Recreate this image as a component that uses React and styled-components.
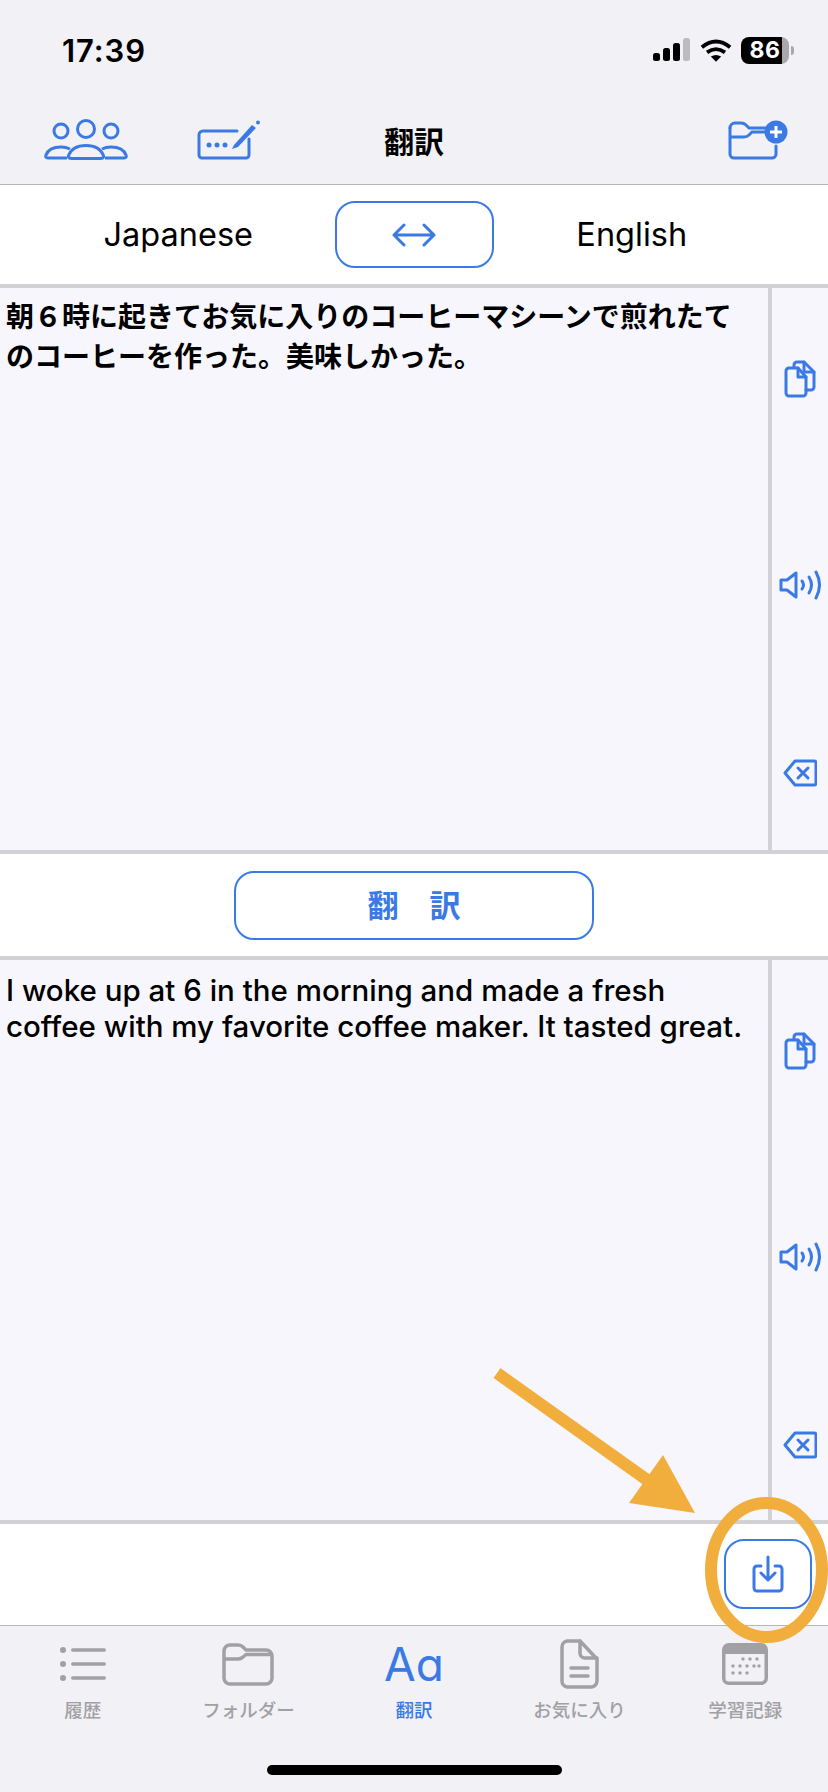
import React from "react";
import styled, { createGlobalStyle } from "styled-components";

const BLUE = "#3b7ae4";
const GRAY = "#a1a1a4";
const LATIN = `Inter, "Noto Sans CJK JP", sans-serif`;

const panels = [
  {
    text: "朝６時に起きてお気に入りのコーヒーマシーンで煎れたてのコーヒーを作った。美味しかった。",
    height: 562,
    cjk: true,
  },
  {
    text: "I woke up at 6 in the morning and made a fresh\ncoffee with my favorite coffee maker. It tasted great.",
    height: 560,
  },
];

function CopyIcon() {
  return (
    <svg width="32" height="38" viewBox="0 0 32 38" fill="none" stroke={BLUE} strokeWidth="3" strokeLinejoin="round" strokeLinecap="round">
      <path d="M5 8h9l8 9v16a3 3 0 0 1-3 3H5a3 3 0 0 1-3-3V11a3 3 0 0 1 3-3z" />
      <path d="M14 8v9h8" />
      <path d="M10 7V5a3 3 0 0 1 3-3h7l10 10v15a3 3 0 0 1-3 3h-5" />
      <path d="M20 2v10h10" />
    </svg>
  );
}

function SpeakerIcon() {
  return (
    <svg width="42" height="30" viewBox="0 0 42 30" fill="none" stroke={BLUE} strokeWidth="3" strokeLinejoin="round" strokeLinecap="round">
      <path d="M2 10h6l9-7v24l-9-7H2z" />
      <path d="M23 11q3 4 0 8" />
      <path d="M30 7q5 8 0 16" />
      <path d="M37 2q7 13 0 26" />
    </svg>
  );
}

function ClearIcon() {
  return (
    <svg width="34" height="28" viewBox="0 0 34 28" fill="none" stroke={BLUE} strokeWidth="3" strokeLinejoin="round" strokeLinecap="round">
      <path d="M12 2h19a2 2 0 0 1 2 2v20a2 2 0 0 1-2 2H12L2 14z" />
      <path d="M15 9l10 10M25 9L15 19" />
    </svg>
  );
}

function TextPanel({ text, height, cjk }) {
  return (
    <Panel $height={height}>
      <PanelText $cjk={cjk}>{text}</PanelText>
      <Rail>
        <RailIcon $top={72}><CopyIcon /></RailIcon>
        <RailIcon $top={172}><SpeakerIcon /></RailIcon>
        <RailIcon $top={159}><ClearIcon /></RailIcon>
      </Rail>
    </Panel>
  );
}

const tabs = [
  {
    label: "履歴",
    icon: (
      <svg width="48" height="36" viewBox="0 0 48 36" fill={GRAY}>
        <circle cx="4" cy="4" r="3" />
        <circle cx="4" cy="18" r="3" />
        <circle cx="4" cy="32" r="3" />
        <rect x="12" y="2.200" width="35" height="3.600" rx="1.800" />
        <rect x="12" y="16.200" width="35" height="3.600" rx="1.800" />
        <rect x="12" y="30.200" width="35" height="3.600" rx="1.800" />
      </svg>
    ),
  },
  {
    label: "フォルダー",
    icon: (
      <svg width="52" height="44" viewBox="0 0 52 44" fill="none" stroke={GRAY} strokeWidth="3.500" strokeLinejoin="round">
        <path d="M2 9a6 6 0 0 1 6-6h8q3 0 5 2l3 3h20a6 6 0 0 1 6 6v22a6 6 0 0 1-6 6H8a6 6 0 0 1-6-6z" />
        <path d="M2 17h14q3 0 5-2l3-2.500h26" />
      </svg>
    ),
  },
  { label: "翻訳", active: true },
  {
    label: "お気に入り",
    icon: (
      <svg width="39" height="50" viewBox="0 0 39 50" fill="none" stroke={GRAY} strokeWidth="3.500" strokeLinejoin="round" strokeLinecap="round">
        <path d="M7 2h13l17 18v22a6 6 0 0 1-6 6H7a6 6 0 0 1-5-6V8a6 6 0 0 1 5-6z" />
        <path d="M20 2v12a5 5 0 0 0 5 5h12" />
        <path d="M11 29h17M11 37h17" />
      </svg>
    ),
  },
  {
    label: "学習記録",
    icon: (
      <svg width="46" height="42" viewBox="0 0 46 42">
        <rect x="1.750" y="1.750" width="42.500" height="38.500" rx="5" fill="none" stroke={GRAY} strokeWidth="3.500" />
        <path d="M1 11V6a5 5 0 0 1 5-5h34a5 5 0 0 1 5 5v5z" fill={GRAY} />
        <g fill={GRAY}>
          {[[21, 16], [28, 16], [35, 16], [11, 23], [18, 23], [25, 23], [32, 23], [37, 23], [11, 30], [18, 30], [25, 30]].map(([x, y]) => (
            <rect key={`${x}-${y}`} x={x - 1.500} y={y - 1.500} width="3" height="3" rx="0.800" />
          ))}
        </g>
      </svg>
    ),
  },
];

function App() {
  return (
    <Page>
      <GlobalStyle />
      <Header>
        <StatusBar>
          <Clock>17:39</Clock>
          <StatusIcons>
            <svg width="38" height="24" viewBox="0 0 38 24">
              <rect x="0" y="15" width="7" height="8" rx="2.500" />
              <rect x="10" y="10" width="7" height="13" rx="2.500" />
              <rect x="20" y="5" width="7" height="18" rx="2.500" />
              <rect x="30" y="0" width="7" height="23" rx="2.500" fill="#bcbcc0" />
            </svg>
            <svg width="32" height="25" viewBox="0 0 34 26" fill="none" stroke="#000" strokeWidth="4">
              <path d="M2 9.500q15-12 30 0" />
              <path d="M7.500 15q9.500-7 19 0" />
              <path d="M17 25l-5.500-5.500q5.500-3.500 11 0z" fill="#000" stroke="none" />
            </svg>
            <Battery>
              <BatteryBody>86</BatteryBody>
              <BatteryNub />
            </Battery>
          </StatusIcons>
        </StatusBar>
        <NavBar>
          <NavLeft>
            <svg width="84" height="42" viewBox="0 0 84 42" fill="none" stroke={BLUE} strokeWidth="3">
              <circle cx="17" cy="12" r="7" />
              <circle cx="42" cy="10" r="8.500" />
              <circle cx="67" cy="12" r="7" />
              <path d="M23 39H4q-3 0-2-3 3-8 15-8 5 0 9 2" strokeLinejoin="round" />
              <path d="M61 39h19q3 0 2-3-3-8-15-8-5 0-9 2" strokeLinejoin="round" />
              <path d="M28 39.500q-4.500 0-3.500-3 4-10 17.500-10t17.500 10q1 3-3.500 3z" strokeLinejoin="round" />
            </svg>
            <svg width="64" height="42" viewBox="0 0 64 42" fill="none" stroke={BLUE}>
              <path d="M40 12H6a4 4 0 0 0-4 4v20a3 3 0 0 0 3 3h44a3 3 0 0 0 3-3V20" strokeWidth="3" strokeLinecap="round" />
              <circle cx="12" cy="26" r="2.500" fill={BLUE} stroke="none" />
              <circle cx="20" cy="26" r="2.500" fill={BLUE} stroke="none" />
              <circle cx="28" cy="26" r="2.500" fill={BLUE} stroke="none" />
              <path d="M37 26L55 6l4 3-18 19-6 2z" fill={BLUE} stroke="none" />
              <circle cx="61" cy="3.500" r="2" fill={BLUE} stroke="none" />
            </svg>
          </NavLeft>
          <NavTitle>翻訳</NavTitle>
          <NavRight>
            <svg width="60" height="42" viewBox="0 0 60 42" fill="none" stroke={BLUE} strokeWidth="3">
              <path d="M2 9a5 5 0 0 1 5-5h6q3 0 5 2l3 3h20" strokeLinecap="round" />
              <path d="M2 9v26a4 4 0 0 0 4 4h38a4 4 0 0 0 4-4v-8" strokeLinecap="round" />
              <path d="M2 18h14q3 0 5-2l3-3h15" />
              <circle cx="48" cy="13" r="11.500" fill={BLUE} stroke="none" />
              <path d="M48 7v12M42 13h12" stroke="#fff" strokeWidth="3" />
            </svg>
          </NavRight>
        </NavBar>
      </Header>

      <LangRow>
        <LangName $pad="0 0 0 22px">Japanese</LangName>
        <OutlineButton $width={159} $height={67}>
          <svg width="44" height="26" viewBox="0 0 44 26" fill="none" stroke={BLUE} strokeWidth="3" strokeLinecap="round" strokeLinejoin="round">
            <path d="M2 13h40M12 3L2 13l10 10M32 3l10 10-10 10" />
          </svg>
        </OutlineButton>
        <LangName $pad="0 58px 0 0">English</LangName>
      </LangRow>

      <TextPanel {...panels[0]} />

      <TranslateRow>
        <OutlineButton $width={360} $height={69}>
          <TranslateLabel>翻　訳</TranslateLabel>
        </OutlineButton>
      </TranslateRow>

      <TextPanel {...panels[1]} />

      <ActionRow>
        <OutlineButton $width={88} $height={70}>
          <svg width="32" height="38" viewBox="0 0 32 38" fill="none" stroke={BLUE} strokeWidth="3" strokeLinecap="round" strokeLinejoin="round">
            <path d="M9 11H5a3 3 0 0 0-3 3v19a3 3 0 0 0 3 3h22a3 3 0 0 0 3-3V14a3 3 0 0 0-3-3h-4" />
            <path d="M16 2v23M9 18l7 7 7-7" />
          </svg>
        </OutlineButton>
      </ActionRow>

      <TabBar>
        <Tabs>
          {tabs.map((tab) => (
            <Tab key={tab.label}>
              <TabIcon>{tab.active ? <AaGlyph>Aa</AaGlyph> : tab.icon}</TabIcon>
              <TabLabel $active={tab.active}>{tab.label}</TabLabel>
            </Tab>
          ))}
        </Tabs>
        <HomeBar />
      </TabBar>

      <Annotation width="828" height="1792" viewBox="0 0 828 1792">
        <path d="M497 1373L650 1482" stroke="#f2ae3d" strokeWidth="12" fill="none" />
        <path d="M695 1513L663 1455 629 1503z" fill="#f2ae3d" />
        <ellipse cx="766.500" cy="1570" rx="55.500" ry="67" fill="none" stroke="#f2ae3d" strokeWidth="12" />
      </Annotation>
    </Page>
  );
}

export default App;

const GlobalStyle = createGlobalStyle`
  html, body {
    margin: 0;
    padding: 0;
    background: #fff;
  }
`;
const Page = styled.div`
  position: relative;
  width: 828px;
  height: 1792px;
  overflow: hidden;
  background: #fff;
  font-family: ${LATIN};
  color: #000;
`;
const Header = styled.header`
  height: 184px;
  background: #f1f1f6;
  border-bottom: 1px solid #b7b7ba;
`;
const StatusBar = styled.div`
  display: flex;
  align-items: center;
  justify-content: space-between;
  height: 100px;
  padding: 0 34px 0 62px;
`;
const Clock = styled.span`
  font-size: 31px;
  font-weight: 600;
  letter-spacing: 0.9px;
`;
const StatusIcons = styled.div`
  display: flex;
  align-items: center;
  gap: 9px;
`;
const Battery = styled.div`
  display: flex;
  align-items: center;
  gap: 2px;
`;
const BatteryBody = styled.span`
  display: flex;
  align-items: center;
  justify-content: center;
  width: 48px;
  height: 27px;
  border-radius: 8px;
  background: linear-gradient(90deg, #000 86%, #a9a9ac 86%);
  color: #fff;
  font-size: 23px;
  font-weight: 700;
  letter-spacing: 0.5px;
`;
const BatteryNub = styled.span`
  width: 3px;
  height: 9px;
  border-radius: 0 3px 3px 0;
  background: #a9a9ac;
`;
const NavBar = styled.nav`
  display: grid;
  grid-template-columns: 1fr auto 1fr;
  align-items: center;
  height: 84px;
  padding-bottom: 4px;
  box-sizing: border-box;
`;
const NavLeft = styled.div`
  display: flex;
  align-items: center;
  gap: 69px;
  padding-left: 44px;
`;
const NavRight = styled.div`
  display: flex;
  justify-content: flex-end;
  padding-right: 40px;
`;
const NavTitle = styled.h1`
  margin: 0;
  font-family: "Noto Sans CJK JP", sans-serif;
  font-size: 30px;
  font-weight: 700;
`;
const LangRow = styled.div`
  display: grid;
  grid-template-columns: minmax(0, 1fr) auto minmax(0, 1fr);
  align-items: center;
  height: 99px;
  border-bottom: 4px solid #d1d1d6;
`;
const LangName = styled.span`
  text-align: center;
  padding: ${(p) => p.$pad};
  font-size: 32.5px;
  font-weight: 400;
`;
const OutlineButton = styled.button`
  display: flex;
  align-items: center;
  justify-content: center;
  flex-shrink: 0;
  width: ${(p) => p.$width}px;
  height: ${(p) => p.$height}px;
  padding: 0;
  background: #fff;
  border: 2px solid ${BLUE};
  border-radius: 20px;
  box-sizing: border-box;
`;
const Panel = styled.section`
  display: flex;
  height: ${(p) => p.$height}px;
  background: #f6f6fc;
  border-bottom: 4px solid #d1d1d6;
`;
const PanelText = styled.p`
  flex: 1;
  margin: 0;
  padding: ${(p) => (p.$cjk ? "7px 12px 0 6px" : "12px 6px 0 6px")};
  font-family: ${(p) => (p.$cjk ? `"Noto Sans CJK JP", sans-serif` : LATIN)};
  font-size: ${(p) => (p.$cjk ? "28px" : "29.5px")};
  font-weight: ${(p) => (p.$cjk ? 600 : 540)};
  line-height: ${(p) => (p.$cjk ? "40px" : "36px")};
  white-space: pre-line;
`;
const Rail = styled.aside`
  display: flex;
  flex-direction: column;
  align-items: center;
  flex-shrink: 0;
  width: 56px;
  border-left: 4px solid #d1d1d6;
`;
const RailIcon = styled.div`
  display: flex;
  margin-top: ${(p) => p.$top}px;
`;
const TranslateRow = styled.div`
  display: flex;
  align-items: center;
  justify-content: center;
  height: 102px;
  border-bottom: 4px solid #d1d1d6;
`;
const TranslateLabel = styled.span`
  margin-top: -4px;
  font-family: "Noto Sans CJK JP", sans-serif;
  font-size: 31px;
  font-weight: 700;
  color: ${BLUE};
`;
const ActionRow = styled.div`
  display: flex;
  align-items: center;
  justify-content: flex-end;
  height: 101px;
  padding: 0 16px 2px 0;
  box-sizing: border-box;
`;
const TabBar = styled.footer`
  display: flex;
  flex-direction: column;
  align-items: center;
  height: 167px;
  box-sizing: border-box;
  background: #f1f1f6;
  border-top: 1px solid #b7b7ba;
`;
const Tabs = styled.div`
  display: grid;
  grid-template-columns: repeat(5, 1fr);
  width: 100%;
  padding-top: 13px;
`;
const Tab = styled.div`
  display: flex;
  flex-direction: column;
  align-items: center;
`;
const TabIcon = styled.div`
  display: flex;
  align-items: center;
  justify-content: center;
  height: 50px;
`;
const AaGlyph = styled.span`
  font-size: 46px;
  font-weight: 400;
  line-height: 50px;
  color: ${BLUE};
  font-feature-settings: "cv11" 1;
`;
const TabLabel = styled.span`
  margin-top: 8px;
  font-family: "Noto Sans CJK JP", sans-serif;
  font-size: 18.5px;
  font-weight: 500;
  line-height: 24px;
  color: ${(p) => (p.$active ? BLUE : GRAY)};
`;
const HomeBar = styled.div`
  width: 295px;
  height: 10px;
  margin-top: 44px;
  border-radius: 5px;
  background: #000;
`;
const Annotation = styled.svg`
  position: absolute;
  top: 0;
  left: 0;
  pointer-events: none;
`;
